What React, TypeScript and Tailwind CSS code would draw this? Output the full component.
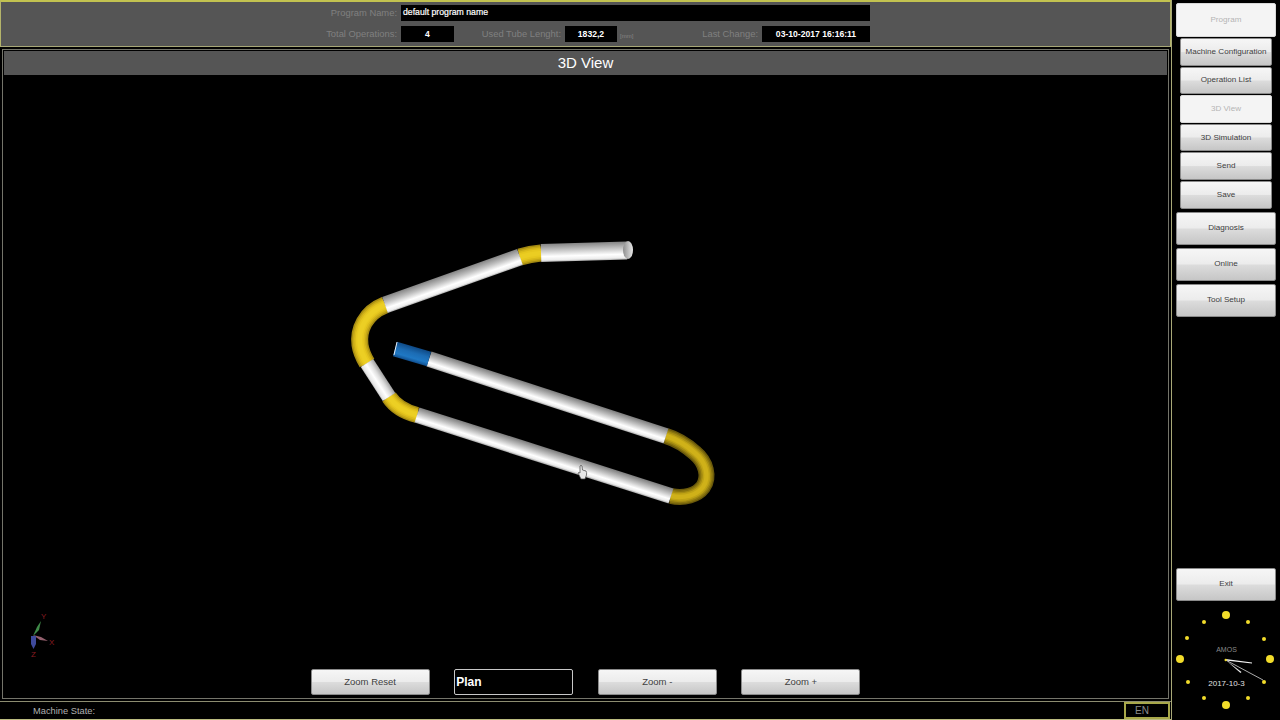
import { Fragment } from 'react';

const arial = "font-['Liberation_Sans',Arial,sans-serif]";
const btn =
  'flex items-center justify-center rounded-[2px] border border-[#8a8a8a] text-[#404040] bg-[linear-gradient(#f6f6f6_0%,#ececec_48%,#dcdcdc_52%,#c6c6c6_100%)]';
const off = 'flex items-center justify-center rounded-[2px] border border-[#d8d8d8] text-[#b4b4b4] bg-[#f4f4f4]';

type P = [number, number];

const lower: [number, string][] = [[0, '#7c7c7c'], [0.35, '#bcbcbc'], [0.7, '#ffffff'], [0.88, '#ececec'], [1, '#a0a0a0']];

const straights: { a: P; b: P; w: number; stops: [number, string][] }[] = [
  { a: [541, 253], b: [627, 250.5], w: 18, stops: [[0, '#848484'], [0.35, '#c2c2c2'], [0.7, '#ffffff'], [0.9, '#ededed'], [1, '#b0b0b0']] },
  { a: [520, 257], b: [385, 305], w: 17, stops: [[0, '#848484'], [0.35, '#bebebe'], [0.7, '#ffffff'], [0.9, '#eeeeee'], [1, '#a8a8a8']] },
  { a: [367, 363], b: [389, 397], w: 15, stops: [[0, '#a0a0a0'], [0.3, '#dcdcdc'], [0.6, '#ffffff'], [0.9, '#e6e6e6'], [1, '#bdbdbd']] },
  { a: [417, 415], b: [671, 496], w: 16, stops: lower },
  { a: [666, 436], b: [429, 359], w: 16, stops: lower },
  { a: [429, 359], b: [395, 349], w: 15, stops: [[0, '#0f4a86'], [0.4, '#1c6cb4'], [0.75, '#1f78c4'], [1, '#114f8e']] },
];

const bends: { d: string; w: number; colors: string[] }[] = [
  { d: 'M541 253 Q530 254 520 257', w: 17, colors: ['#a48a12', '#c4a716', '#d9ba1a', '#e6c71e', '#ebcd22'] },
  { d: 'M385 305 C365 313 358 330 360 345 C361 352 364 358 367 363', w: 17, colors: ['#a88d12', '#c8aa17', '#dcbc1b', '#e8c91f', '#eccf24'] },
  { d: 'M389 397 C395 406 405 412 417 415', w: 16, colors: ['#a88d12', '#c8aa17', '#dcbc1b', '#e8c91f', '#eccf24'] },
  { d: 'M671 496 C684 499 697 495 703 487 C710 477 706 462 695 453 C686 445 676 439 666 436', w: 16, colors: ['#6a590b', '#88730e', '#a58c12', '#bfa315', '#cfb119'] },
];

// normal of a segment, pointing up the screen
function normal(a: P, b: P): P {
  const dx = b[0] - a[0];
  const dy = b[1] - a[1];
  const len = Math.hypot(dx, dy);
  let nx = -dy / len;
  let ny = dx / len;
  if (ny > 0) {
    nx = -nx;
    ny = -ny;
  }
  return [nx, ny];
}

function Tube() {
  return (
    <>
      <defs>
        {straights.map((s, i) => {
          const [nx, ny] = normal(s.a, s.b);
          const mx = (s.a[0] + s.b[0]) / 2;
          const my = (s.a[1] + s.b[1]) / 2;
          return (
            <linearGradient
              key={i}
              id={`tube${i}`}
              gradientUnits="userSpaceOnUse"
              x1={mx + (nx * s.w) / 2}
              y1={my + (ny * s.w) / 2}
              x2={mx - (nx * s.w) / 2}
              y2={my - (ny * s.w) / 2}
            >
              {s.stops.map(([o, c]) => (
                <stop key={o} offset={o} stopColor={c} />
              ))}
            </linearGradient>
          );
        })}
        <linearGradient id="cap" x1="0" y1="0" x2="1" y2="0">
          <stop offset="0" stopColor="#8e8e8e" />
          <stop offset="1" stopColor="#e8e8e8" />
        </linearGradient>
      </defs>
      {bends.map((b, i) => (
        <Fragment key={i}>
          {b.colors.map((c, j) => (
            <path key={j} d={b.d} fill="none" stroke={c} strokeWidth={b.w * (1 - j * 0.18)} />
          ))}
        </Fragment>
      ))}
      {straights.map((s, i) => (
        <line
          key={i}
          x1={s.a[0]}
          y1={s.a[1]}
          x2={s.b[0]}
          y2={s.b[1]}
          stroke={`url(#tube${i})`}
          strokeWidth={s.w}
        />
      ))}
      <ellipse cx="628" cy="250" rx="5" ry="9" fill="url(#cap)" />
      <line x1="397" y1="342" x2="394" y2="355" stroke="#e8f0f8" strokeWidth="1" />
    </>
  );
}

function Gizmo() {
  return (
    <g fontFamily="Liberation Sans, Arial, sans-serif" fontSize="8" fill="#8a1c22">
      <path d="M33 636 L37 627 L41 621 L39 630 Z" fill="#3f8a48" />
      <path d="M33 635 L41 637 L48 641 L40 640 Z" fill="#94606e" />
      <path d="M31 636 L36 636 L36 644 L33.5 649 L31 644 Z" fill="#3f4a9c" />
      <text x="41" y="619">Y</text>
      <text x="49" y="645">X</text>
      <text x="31" y="657">Z</text>
    </g>
  );
}

function Cursor() {
  return (
    <path
      d="M580 466 Q581 464.5 582 466 L582.5 470 L586 471 Q587 472 586.5 475 L585 479 L581 479 L578 473 Q578 472 580 473 Z"
      fill="#e8e8e8"
      stroke="#444"
      strokeWidth="0.7"
    />
  );
}

const clockDots: [number, number, number][] = [
  [54, 14, 4], [76, 21, 2], [92, 38, 2], [98, 58, 4], [92, 81, 2], [76, 97, 2],
  [54, 104, 4], [32, 97, 2], [16, 81, 2], [8, 58, 4], [15, 37, 2], [32, 21, 2],
];

function Clock() {
  return (
    <div className="relative h-[119px] w-full">
      <svg viewBox="0 0 109 119" className="block h-[119px] w-[109px]">
        {clockDots.map(([x, y, r]) => (
          <circle key={`${x}-${y}`} cx={x} cy={y} r={r} fill="#f2dc2a" />
        ))}
        <path d="M53.7 58 L80 61.5 L80 62.5 L53.7 59.5 Z" fill="#f4f4f4" />
        <path d="M53.7 59 L69.5 71 L68.5 72 L53.7 59 Z" fill="#e8e8e8" />
        <line x1="53.7" y1="59" x2="91" y2="79" stroke="#d8d8d8" strokeWidth="0.8" />
        <circle cx="53.7" cy="59" r="1.2" fill="#f2dc2a" />
      </svg>
      <span className={`${arial} absolute left-0 right-0 top-[44px] text-center text-[7px] leading-[9px] text-[#8a8a8a]`}>
        AMOS
      </span>
      <span className={`${arial} absolute left-0 right-0 top-[77px] text-center text-[8px] leading-[12px] text-[#e0e0e0]`}>
        2017-10-3
      </span>
    </div>
  );
}

function Label({ width, children }: { width: string; children: string }) {
  return <span className={`${width} pr-1 text-right text-[9.4px] text-[#808080]`}>{children}</span>;
}

function Field({ width, children }: { width: string; children: string }) {
  return (
    <span className={`${width} flex h-[16px] items-center justify-center bg-black text-[8.6px] font-bold text-white`}>
      {children}
    </span>
  );
}

export default function App() {
  return (
    <div className={`${arial} flex h-screen w-screen overflow-hidden bg-black`}>
      <div className="flex w-[1171px] shrink-0 flex-col">
        {/* program info */}
        <header className="flex h-[47px] shrink-0 flex-col gap-[5px] border-x border-b border-t-2 border-x-[#b4b46a] border-b-[#a8a878] border-t-[#c2c250] bg-[#555555] pt-[3px]">
          <div className="flex items-center">
            <Label width="w-[400px]">Program Name:</Label>
            <span className="flex h-[16px] w-[469px] items-center bg-black pl-[2px] text-[8.7px] text-white [-webkit-text-stroke:0.2px_white]">
              default program name
            </span>
          </div>
          <div className="flex items-center">
            <Label width="w-[400px]">Total Operations:</Label>
            <Field width="w-[53px]">4</Field>
            <Label width="w-[111px]">Used Tube Lenght:</Label>
            <Field width="w-[52px]">1832,2</Field>
            <span className="w-[22px] pl-[3px] pt-[5px] text-[6px] text-[#858585]">[mm]</span>
            <Label width="w-[123px]">Last Change:</Label>
            <Field width="w-[108px]">03-10-2017 16:16:11</Field>
          </div>
        </header>

        {/* 3D view */}
        <main className="mx-[2px] mt-[2px] flex h-[650px] shrink-0 flex-col border border-[#74746a] p-[1px]">
          <h1 className="flex h-[24px] shrink-0 items-center justify-center bg-[#555555] text-[15px] font-normal text-white">
            3D View
          </h1>
          <svg viewBox="4 75 1163 594" className="block h-[594px] w-full shrink-0">
            <Tube />
            <Gizmo />
            <Cursor />
          </svg>
          <div className="flex h-[26px] justify-center gap-[24.6px] text-[9.5px]">
            <div className={`${btn} w-[119px]`}>Zoom Reset</div>
            <div className="flex w-[119px] items-center rounded-[2px] border border-[#c8c8c8] pl-[1px] text-[12px] font-bold text-white">
              Plan
            </div>
            <div className={`${btn} w-[119px]`}>Zoom -</div>
            <div className={`${btn} w-[119px]`}>Zoom +</div>
          </div>
        </main>

        {/* status */}
        <footer className="mt-[2px] flex h-[19px] flex-1 items-stretch border-t border-[#8c8c70] border-b border-b-[#bcbc80]">
          <span className="flex-1 pl-[33px] pt-[3px] text-[9.3px] text-[#b0b0b0]">Machine State:</span>
          <span className="mr-[1px] flex w-[46px] items-center justify-center border-2 border-[#a8a84a] pr-[10px] text-[10px] text-[#8a8a8a]">
            EN
          </span>
        </footer>
      </div>

      {/* navigation */}
      <aside className="flex flex-1 flex-col border-l border-[#a8a878] pl-[4px] pr-[3px] pt-[3px] text-[8.1px]">
        <div className={`${off} h-[34px] w-[100px]`}>Program</div>
        <div className="mt-[1px] flex w-[100px] flex-col gap-[1px] px-[4px]">
          <div className={`${btn} h-[27.6px]`}>Machine Configuration</div>
          <div className={`${btn} h-[27.6px]`}>Operation List</div>
          <div className={`${off} h-[27.6px]`}>3D View</div>
          <div className={`${btn} h-[27.6px]`}>3D Simulation</div>
          <div className={`${btn} h-[27.6px]`}>Send</div>
          <div className={`${btn} h-[27.6px]`}>Save</div>
        </div>
        <div className="mt-[3px] flex w-[100px] flex-col gap-[3px]">
          <div className={`${btn} h-[33px]`}>Diagnosis</div>
          <div className={`${btn} h-[33px]`}>Online</div>
          <div className={`${btn} h-[33px]`}>Tool Setup</div>
        </div>
        <div className={`${btn} mt-auto h-[33px] w-[100px]`}>Exit</div>
        <div className="-ml-[4px] w-[109px]">
          <Clock />
        </div>
      </aside>
    </div>
  );
}
